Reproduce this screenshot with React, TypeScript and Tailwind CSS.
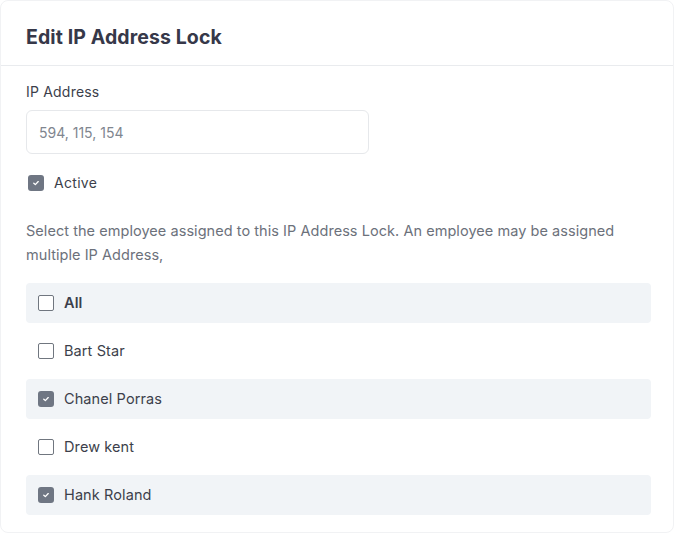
import { useState } from 'react'

const employees = [
  { id: 'all', name: 'All', bold: true },
  { id: 'bart', name: 'Bart Star' },
  { id: 'chanel', name: 'Chanel Porras' },
  { id: 'drew', name: 'Drew kent' },
  { id: 'hank', name: 'Hank Roland' },
]

function Box({ checked }: { checked: boolean }) {
  if (checked) {
    return (
      <span className="flex items-center justify-center w-4 h-4 rounded-[3px] bg-[#6f7683] shrink-0">
        <svg viewBox="0 0 10 10" className="w-[8px] h-[8px]" fill="none">
          <path d="M2.2 5.2 4.2 7 7.8 3.2" stroke="#fff" strokeWidth="1.6" strokeLinecap="round" strokeLinejoin="round" />
        </svg>
      </span>
    )
  }
  return <span className="block w-4 h-4 rounded-[2px] border-[1.5px] border-[#70767f] bg-white shrink-0" />
}

export default function App() {
  const [active, setActive] = useState(true)
  const [selected, setSelected] = useState<Record<string, boolean>>({ chanel: true, hank: true })

  return (
    <div className="w-[674px] h-[533px] bg-white font-['Inter',sans-serif] text-[#3b3e4b]">
      <div className="h-full rounded-lg border border-[#f1f2f4]">
        <div className="h-[65px] px-[25px] pt-[9px] flex items-center border-b border-[#e9ebee]">
          <h1 className="text-[19.5px] font-bold text-[#363849] tracking-[0.1px]">Edit IP Address Lock</h1>
        </div>

        <div className="px-[25px] pt-[16px]">
          <label className="block text-[14px] leading-[20px] text-[#3c3f4b] tracking-[0.2px]">IP Address</label>
          <input
            className="mt-[8px] w-[343px] h-[44px] rounded-md border border-[#e6e8eb] px-[12px] text-[14px] text-[#3c3f4b] placeholder:text-[#80868f] outline-none"
            placeholder="594, 115, 154"
          />

          <button className="mt-[19px] flex items-center gap-[10px] pl-[2px]" onClick={() => setActive(!active)}>
            <Box checked={active} />
            <span className="text-[14px] leading-[20px] text-[#3c3f4b] tracking-[0.3px]">Active</span>
          </button>

          <p className="mt-[26px] text-[14.5px] leading-[24px] text-[#6c717b] tracking-[0.05px]">
            Select the employee assigned to this IP Address Lock. An employee may be assigned multiple IP Address,
          </p>

          <div className="mt-[16px] flex flex-col gap-[8px] w-[625px]">
            {employees.map((e, i) => (
              <button
                key={e.id}
                onClick={() => setSelected({ ...selected, [e.id]: !selected[e.id] })}
                className={`h-[40px] flex items-center gap-[10px] px-[12px] rounded-[4px] text-left ${i % 2 === 0 ? 'bg-[#f1f4f7]' : 'bg-white'}`}
              >
                <Box checked={!!selected[e.id]} />
                <span className={`text-[14.5px] leading-[20px] text-[#3c3f4b] tracking-[0.1px] ${e.bold ? 'font-semibold' : ''}`}>{e.name}</span>
              </button>
            ))}
          </div>
        </div>
      </div>
    </div>
  )
}
